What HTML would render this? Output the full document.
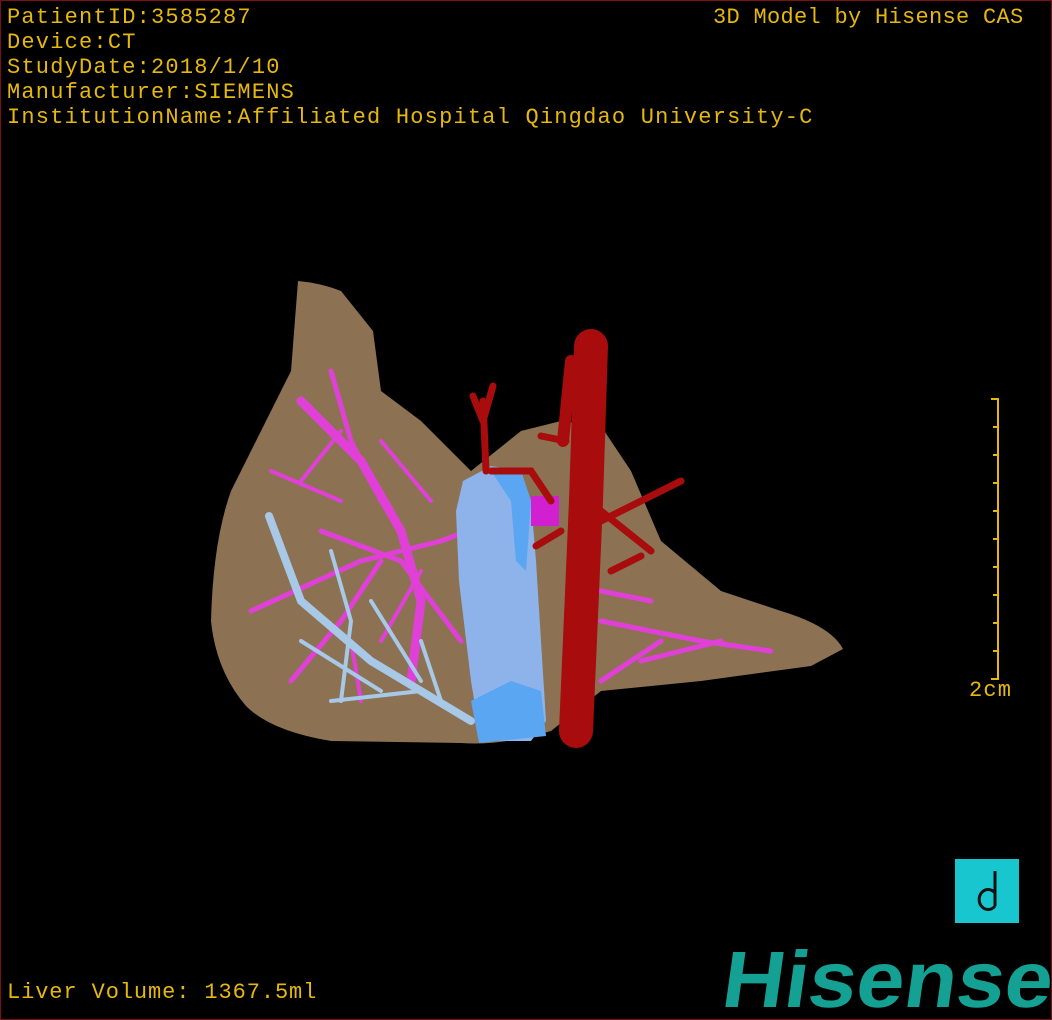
<!DOCTYPE html>
<html><head><style>
html,body{margin:0;padding:0;background:#000;}
#c{position:relative;width:1050px;height:1018px;border:1px solid #7a1010;overflow:hidden;background:#000;}
.t{position:absolute;color:#e6b80e;font-family:"Liberation Mono","DejaVu Sans Mono",monospace;font-size:22px;line-height:25px;white-space:pre;letter-spacing:1.2px}
</style></head><body><div id="c">
<div class="t" style="left:6px;top:4px">PatientID:3585287
Device:CT
StudyDate:2018/1/10
Manufacturer:SIEMENS
InstitutionName:Affiliated Hospital Qingdao University-C</div>
<div class="t" style="left:712px;top:4px;letter-spacing:0.3px">3D Model by Hisense CAS</div>
<div class="t" style="left:6px;top:979px;letter-spacing:0.9px">Liver Volume: 1367.5ml</div>
<div class="t" style="left:968px;top:677px">2cm</div>
<svg style="position:absolute;left:0;top:0" width="1050" height="1018">
<g stroke="#e6b80e" stroke-width="2"><line x1="997" y1="398" x2="997" y2="678"/>
<line x1="990" y1="398" x2="998" y2="398"/><line x1="990" y1="678" x2="998" y2="678"/>
<line x1="992" y1="426" x2="998" y2="426"/><line x1="992" y1="454" x2="998" y2="454"/><line x1="992" y1="482" x2="998" y2="482"/><line x1="992" y1="510" x2="998" y2="510"/><line x1="992" y1="538" x2="998" y2="538"/><line x1="992" y1="566" x2="998" y2="566"/><line x1="992" y1="594" x2="998" y2="594"/><line x1="992" y1="622" x2="998" y2="622"/><line x1="992" y1="650" x2="998" y2="650"/></g>
<path d="M297 280 Q320 282 340 290 L372 330 L380 390 L420 420 L470 470 L520 430 L560 420 L600 425 L630 470 L660 540 L720 590 L780 610 Q830 625 842 648 L810 665 L700 680 L600 690 L550 730 Q500 745 460 742 L330 740 Q270 730 245 705 Q215 670 210 620 Q212 540 230 490 L265 420 L290 370 Z" fill="#8c7252"/>
<g stroke="#e040d8" fill="none" stroke-linecap="round">
<path d="M300 400 L360 460 L400 530 L420 600 L410 680" stroke-width="9"/>
<path d="M330 370 L350 440 L380 500 M250 610 L360 560 L440 540 L520 510 M290 680 L340 620 L380 560 M320 530 L400 560 L460 640 M600 590 L650 600 M600 620 L700 640 L770 650 M640 660 L720 640 M600 680 L660 640" stroke-width="5"/>
<path d="M270 470 L340 500 M340 430 L300 480 M380 440 L430 500 M350 640 L360 700 M420 570 L380 640" stroke-width="4"/>
</g>
<g stroke="#a8c8e8" fill="none" stroke-linecap="round">
<path d="M268 515 L300 600 L370 660 L470 720" stroke-width="8"/>
<path d="M330 550 L350 620 L340 700 M300 640 L380 690 M420 640 L440 700 M370 600 L420 680 M330 700 L420 690" stroke-width="4"/>
</g>
<path d="M462 480 L490 465 L520 470 L530 500 L535 560 L545 720 L530 740 L480 740 L470 680 L458 580 L455 510 Z" fill="#8eb2ea"/>
<path d="M490 470 L520 470 L530 500 L525 570 L515 560 L510 500 Z M470 700 L510 680 L540 690 L545 735 L478 742 Z" fill="#5aa6f2"/>
<rect x="530" y="495" width="28" height="30" fill="#d020d0"/>
<g stroke="#a80c0c" fill="none" stroke-linecap="round">
<path d="M590 345 L585 500 L575 730" stroke-width="34"/>
<path d="M570 360 L562 440" stroke-width="12"/>
<path d="M490 470 L530 470 L550 500 M600 520 L680 480 M600 510 L650 550 M535 545 L560 530 M540 435 L565 440 M610 570 L640 555 M485 470 L482 400 M482 420 L472 395 M482 420 L492 385" stroke-width="7"/>
</g>
<rect x="954" y="858" width="64" height="64" fill="#17c6cf"/>
<path d="M994 870 V905 M994 892 A9 10 0 1 0 994 905" stroke="#111" stroke-width="3" fill="none"/>
<text x="720" y="1006" fill="#14a092" font-family="Liberation Sans,sans-serif" font-weight="bold" font-size="80" textLength="330" lengthAdjust="spacingAndGlyphs" transform="skewX(-8) translate(140,0)">Hisense</text>
</svg>
</div></body></html>
